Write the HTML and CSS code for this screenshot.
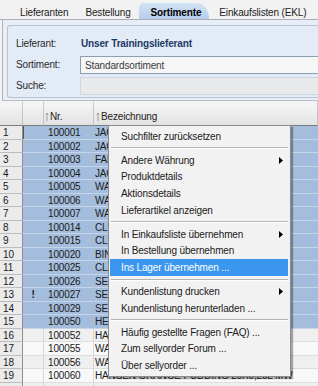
FILE: index.html
```html
<!DOCTYPE html>
<html lang="de">
<head>
<meta charset="UTF-8" />
<title>Sortimente</title>
<link rel="stylesheet" href="styles.css">
</head>
<body>

<div class="tabs">
  <span class="tab">Lieferanten</span>
  <span class="sep"></span>
  <span class="tab">Bestellung</span>
  <span class="tab on">Sortimente</span>
  <span class="tab">Einkaufslisten (EKL)</span>
  <span class="sep"></span>
</div>

<div class="panel">
  <div class="box">
    <div class="feld"><span class="lbl">Lieferant:</span><span class="wert">Unser Trainingslieferant</span></div>
    <div class="feld"><span class="lbl">Sortiment:</span><div class="eingabe">Standardsortiment</div></div>
    <div class="feld"><span class="lbl">Suche:</span><div class="eingabe leer"></div></div>
  </div>
</div>

<div class="tabelle">
  <div class="zeile gruppe"><span class="rn"></span><span class="mk"></span><span class="nr"></span><span class="bz"></span></div>
  <div class="zeile kopf">
    <span class="rn"></span><span class="mk"></span>
    <span class="nr"><svg class="sort" width="4" height="9" viewBox="0 0 4 9"><path d="M2 9V1M0.5 2.5L2 1L3.5 2.5" fill="none" stroke="#8a8a8a" stroke-width="0.8"/></svg>Nr.</span>
    <span class="bz"><svg class="sort" width="4" height="9" viewBox="0 0 4 9"><path d="M2 9V1M0.5 2.5L2 1L3.5 2.5" fill="none" stroke="#8a8a8a" stroke-width="0.8"/></svg>Bezeichnung</span>
  </div>
  <div class="zeile sel"><span class="rn">1</span><span class="mk fokus"></span><span class="nr">100001</span><span class="bz">JACOBS KRÖNUNG 500G</span></div>
  <div class="zeile sel"><span class="rn">2</span><span class="mk"></span><span class="nr">100002</span><span class="bz">JACOBS MEDAILLE 500G</span></div>
  <div class="zeile sel"><span class="rn">3</span><span class="mk"></span><span class="nr">100003</span><span class="bz">FANTA ORANGE 24X0,33L</span></div>
  <div class="zeile sel"><span class="rn">4</span><span class="mk"></span><span class="nr">100004</span><span class="bz">JACOBS CAFÉ CREMA 1KG</span></div>
  <div class="zeile sel"><span class="rn">5</span><span class="mk"></span><span class="nr">100005</span><span class="bz">WASA KNÄCKEBROT 275G</span></div>
  <div class="zeile sel"><span class="rn">6</span><span class="mk"></span><span class="nr">100006</span><span class="bz">WASA SESAM 200G</span></div>
  <div class="zeile sel"><span class="rn">7</span><span class="mk"></span><span class="nr">100007</span><span class="bz">WASA VOLLKORN 260G</span></div>
  <div class="zeile sel"><span class="rn">8</span><span class="mk"></span><span class="nr">100014</span><span class="bz">CLUB MATE 20X0,5L</span></div>
  <div class="zeile sel"><span class="rn">9</span><span class="mk"></span><span class="nr">100015</span><span class="bz">CLUB MATE ICE T 20X0,5L</span></div>
  <div class="zeile sel"><span class="rn">10</span><span class="mk"></span><span class="nr">100020</span><span class="bz">BINDING LAGER 20X0,5L</span></div>
  <div class="zeile sel"><span class="rn">11</span><span class="mk"></span><span class="nr">100025</span><span class="bz">CLAUSTHALER 24X0,33L</span></div>
  <div class="zeile sel"><span class="rn">12</span><span class="mk"></span><span class="nr">100026</span><span class="bz">SEITENBACHER MÜSLI 750G</span></div>
  <div class="zeile sel"><span class="rn">13</span><span class="mk">!</span><span class="nr">100027</span><span class="bz">SEITENBACHER CRUNCH 750G</span></div>
  <div class="zeile sel"><span class="rn">14</span><span class="mk"></span><span class="nr">100029</span><span class="bz">SEITENBACHER NUSS 500G</span></div>
  <div class="zeile sel"><span class="rn">15</span><span class="mk"></span><span class="nr">100050</span><span class="bz">HENKELL TROCKEN 0,75L</span></div>
  <div class="zeile"><span class="rn">16</span><span class="mk"></span><span class="nr">100052</span><span class="bz">HANSEN SCHORLE 20X0,5L</span></div>
  <div class="zeile hell"><span class="rn">17</span><span class="mk"></span><span class="nr">100055</span><span class="bz">WARSTEINER 20X0,5L</span></div>
  <div class="zeile"><span class="rn">18</span><span class="mk"></span><span class="nr">100056</span><span class="bz">WARSTEINER ALKOHOLFREI</span></div>
  <div class="zeile hell"><span class="rn">19</span><span class="mk"></span><span class="nr">100060</span><span class="bz">HANSEN ORANGE PUDDING 20X0,25L MW</span></div>
  <div class="zeile"><span class="rn"></span><span class="mk"></span><span class="nr"></span><span class="bz"></span></div>
</div>

<div class="menue">
  <div class="punkt">Suchfilter zurücksetzen</div>
  <div class="trenner"></div>
  <div class="punkt">Andere Währung<svg class="pfeil" width="4" height="7" viewBox="0 0 4 7"><path d="M0 0L4 3.5L0 7Z"/></svg></div>
  <div class="punkt">Produktdetails</div>
  <div class="punkt">Aktionsdetails</div>
  <div class="punkt">Lieferartikel anzeigen</div>
  <div class="trenner"></div>
  <div class="punkt">In Einkaufsliste übernehmen<svg class="pfeil" width="4" height="7" viewBox="0 0 4 7"><path d="M0 0L4 3.5L0 7Z"/></svg></div>
  <div class="punkt">In Bestellung übernehmen</div>
  <div class="punkt aktiv">Ins Lager übernehmen ...</div>
  <div class="trenner"></div>
  <div class="punkt">Kundenlistung drucken<svg class="pfeil" width="4" height="7" viewBox="0 0 4 7"><path d="M0 0L4 3.5L0 7Z"/></svg></div>
  <div class="punkt">Kundenlistung herunterladen ...</div>
  <div class="trenner"></div>
  <div class="punkt">Häufig gestellte Fragen (FAQ) ...</div>
  <div class="punkt">Zum sellyorder Forum ...</div>
  <div class="punkt">Über sellyorder ...</div>
</div>

</body>
</html>
```

FILE: styles.css
```css
body { margin:0; width:318px; height:386px; overflow:hidden; position:relative; background:#f2f2f2; color:#1a1a1a; font-family:"Liberation Sans", Arial, sans-serif; font-size:10px; letter-spacing:-0.15px; }

/* Reiter */
.tabs { height:19px; border-bottom:1px solid #a6afba; display:flex; align-items:flex-end; padding-left:20px; }
.tab { height:16px; line-height:20px; white-space:nowrap; color:#222; }
.tab.on { margin:0 10px 0 8px; padding:0 8px 0 12px; background:linear-gradient(#d3e3f5, #b5cdec); border-radius:5px 12px 0 0 / 5px 16px 0 0; font-weight:bold; color:#000; }
.sep { width:1px; height:13px; margin:0 7px 1px 10px; background:#c6c6c6; transform:skewX(18deg); }

/* Kopfbereich */
.panel { height:81px; box-sizing:border-box; margin-left:2px; padding:5px 0 0 4px; border-left:1px solid #aab5c2; border-bottom:1px solid #b4bec9; background:#e8eef7; }
.box { height:73px; box-sizing:border-box; padding-top:7px; border:1px solid #b8c3d0; border-right:none; border-radius:3px 0 0 3px; background:#e3ebf6; }
.feld { display:flex; align-items:center; height:21px; }
.lbl { width:64px; padding-left:8px; color:#2a2a2a; }
.wert { margin-left:1px; font-weight:bold; color:#1c3a68; }
.eingabe { flex:1; height:18px; line-height:18px; box-sizing:border-box; padding-left:4px; margin-right:-2px; border:1px solid #8e9eb2; background:#f6f6f6; color:#3a3a3a; }
.eingabe.leer { border-color:#cfd5dc; background:#e8e9ea; }

/* Tabelle */
.zeile { display:flex; height:13.5px; line-height:13.5px; white-space:nowrap; }
.zeile span { box-sizing:border-box; height:100%; overflow:hidden; }
.rn { width:23px; flex:none; padding-left:3px; background:#ebebeb; border-right:1px solid #8f8f8f; border-bottom:1px solid #bdbdbd; }
.mk { width:21px; flex:none; text-align:center; font-weight:bold; border-right:1px solid #d6d6d6; }
.nr { width:50px; flex:none; padding-left:4px; border-right:1px solid #d6d6d6; }
.bz { flex:1; padding-left:1px; }
.zeile .mk, .zeile .nr, .zeile .bz { background:#efefef; border-bottom:1px solid #dedede; }
.zeile.hell .mk, .zeile.hell .nr, .zeile.hell .bz { background:#f8f8f8; }
.zeile.sel .mk, .zeile.sel .nr, .zeile.sel .bz { background:#a4bddc; border-bottom-color:#c6d5e8; border-right-color:#a4bddc; }
.zeile.sel .mk.fokus { box-shadow:inset 1px 0 0 #555; }

.zeile.gruppe { height:7px; }
.zeile.gruppe span { background:#f3f3f3; border-bottom:none; border-right:1px solid #cdcdcd; }
.zeile.kopf { height:18px; line-height:18px; }
.zeile.kopf span { background:linear-gradient(#f1f1f1, #e2e2e2); border-bottom:1px solid #7d7d7d; border-right:1px solid #c2c2c2; color:#222; }
.zeile.kopf .nr { padding-left:1px; }
.zeile.kopf .bz { padding-left:2px; }
.sort { margin-right:1px; vertical-align:-1px; }

/* Kontextmenü */
.menue { position:absolute; left:108px; top:125px; width:183px; box-sizing:border-box; padding:2px 2px 2px 1px; border:1px solid #8c8c8c; background:#f2f2f2; box-shadow:2px 2px 1px rgba(0,0,0,0.32); }
.punkt { display:flex; align-items:center; height:16.6px; padding-left:11px; white-space:nowrap; color:#1a1a1a; }
.punkt.aktiv { background:#3a96ee; color:#fff; }
.pfeil { margin-left:auto; margin-right:5px; fill:#000; }
.trenner { height:0; margin:2.75px 0 2.75px 1px; border-top:1px solid #b3b3b3; border-bottom:1px solid #fff; }
```
